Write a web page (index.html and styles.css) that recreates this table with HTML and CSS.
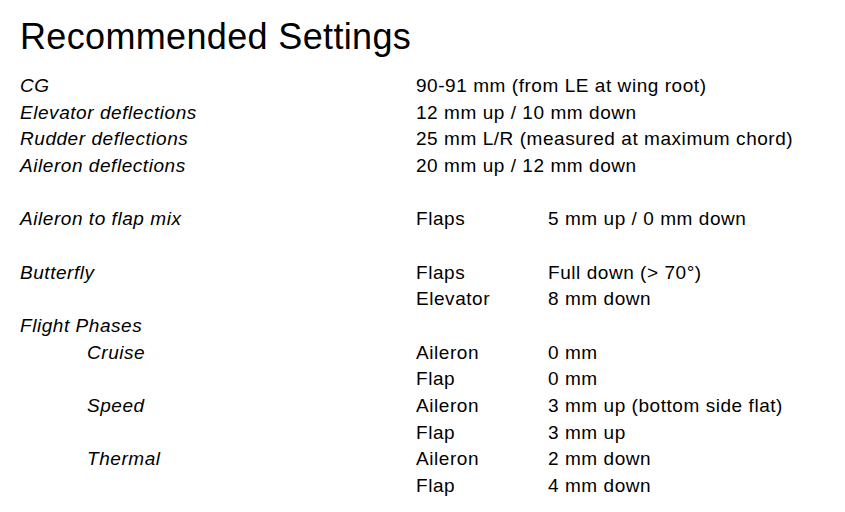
FILE: index.html
```html
<!DOCTYPE html>
<html>
<head>
<meta charset="utf-8">
<link rel="stylesheet" href="styles.css">
</head>
<body>
<div class="page">
  <h1 class="title">Recommended Settings</h1>
  <div class="table">
    <div class="label">CG</div><div class="value wide">90-91 mm (from LE at wing root)</div>
    <div class="label">Elevator deflections</div><div class="value wide">12 mm up / 10 mm down</div>
    <div class="label">Rudder deflections</div><div class="value wide">25 mm L/R (measured at maximum chord)</div>
    <div class="label">Aileron deflections</div><div class="value wide">20 mm up / 12 mm down</div>
    <div class="blank"></div>
    <div class="label">Aileron to flap mix</div><div class="value">Flaps</div><div class="value">5 mm up / 0 mm down</div>
    <div class="blank"></div>
    <div class="label">Butterfly</div><div class="value">Flaps</div><div class="value">Full down (&gt; 70°)</div>
    <div class="label"></div><div class="value">Elevator</div><div class="value">8 mm down</div>
    <div class="label">Flight Phases</div><div class="value"></div><div class="value"></div>
    <div class="label sub">Cruise</div><div class="value">Aileron</div><div class="value">0 mm</div>
    <div class="label"></div><div class="value">Flap</div><div class="value">0 mm</div>
    <div class="label sub">Speed</div><div class="value">Aileron</div><div class="value">3 mm up (bottom side flat)</div>
    <div class="label"></div><div class="value">Flap</div><div class="value">3 mm up</div>
    <div class="label sub">Thermal</div><div class="value">Aileron</div><div class="value">2 mm down</div>
    <div class="label"></div><div class="value">Flap</div><div class="value">4 mm down</div>
  </div>
</div>
</body>
</html>
```
FILE: styles.css
```css
html, body {
  margin: 0;
  padding: 0;
  background: #ffffff;
}
body {
  font-family: "Liberation Sans", Arial, sans-serif;
  color: #000000;
}
.page {
  padding: 14px 0 0 20px;
}
.title {
  margin: 0;
  font-size: 36px;
  font-weight: normal;
  line-height: 46px;
  letter-spacing: 0.35px;
}
.table {
  margin-top: 13px;
  display: grid;
  grid-template-columns: 396px 132px auto;
  grid-auto-rows: 26.67px;
  font-size: 19px;
  line-height: 26.67px;
  letter-spacing: 0.55px;
}
.label {
  font-style: italic;
  white-space: nowrap;
}
.label.sub {
  padding-left: 67px;
}
.value {
  white-space: nowrap;
}
.wide {
  grid-column: 2 / 4;
}
.blank {
  grid-column: 1 / 4;
}
```
